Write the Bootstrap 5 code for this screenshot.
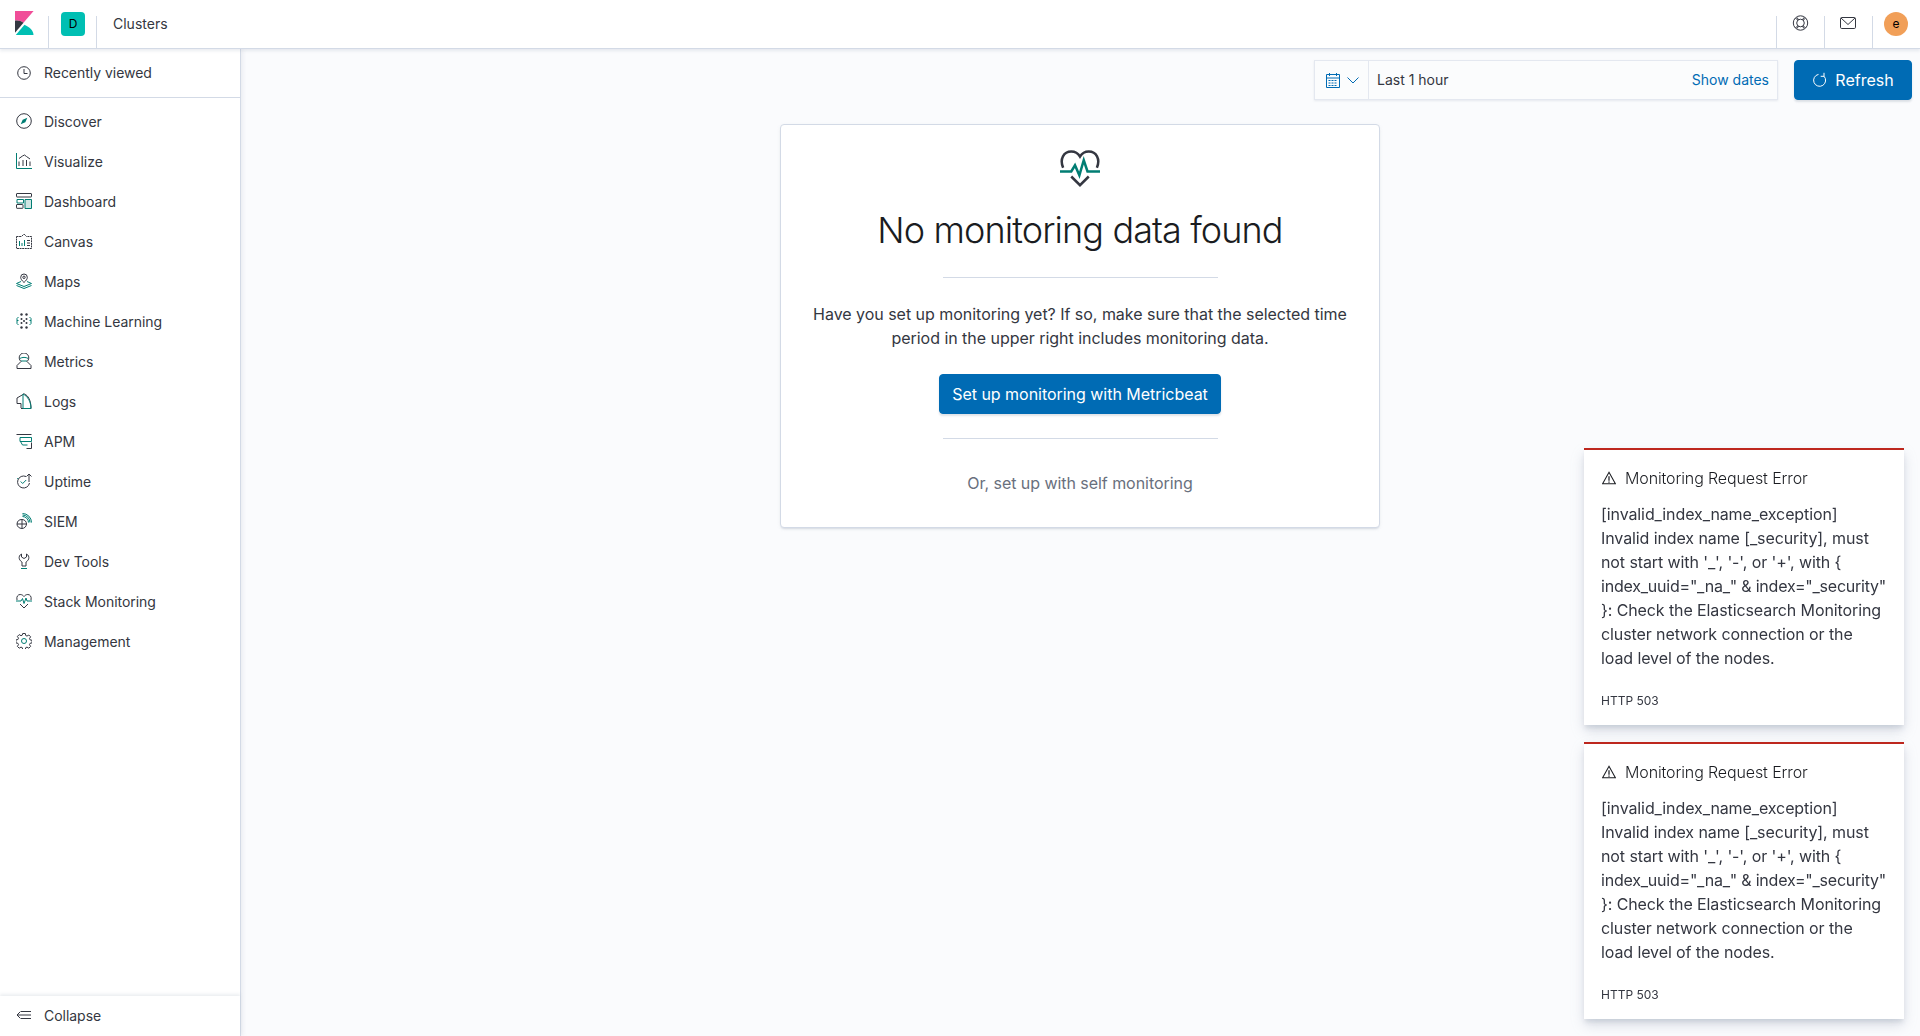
<!DOCTYPE html>
<html lang="en">
<head>
<meta charset="utf-8">
<title>Clusters</title>
<link href="https://cdn.jsdelivr.net/npm/bootstrap@5.3.0/dist/css/bootstrap.min.css" rel="stylesheet">
<style>
html,body{height:100%}
body{font-family:Inter,"Noto Sans",sans-serif;background:#fafbfd;color:#343741;font-size:14px;overflow:hidden}
svg{display:block;flex:none}
.ico-d{fill:none;stroke:#343741;stroke-width:1}
.ico-t{fill:none;stroke:#017d73;stroke-width:1}
.topbar{height:49px;background:#fff;border-bottom:1px solid #d3dae6;box-shadow:0 2px 3px rgba(152,162,179,.2);position:relative;z-index:3}
.top-sec{width:48px;height:32px;margin-top:16px;border-left:1px solid #d3dae6}
.logo-sec{width:48px;padding:11px 0 0 15px}
.tile{width:24px;height:24px;border-radius:4px;background:#00bfb3;color:#000;font-size:12px;margin:-4px 0 0 12px}
.bread-wrap{border-left:1px solid #d3dae6;height:32px;margin-top:16px}
.crumb-txt{margin-top:-16px;padding-left:16px;line-height:48px;color:#343741}
.avatar{width:24px;height:24px;border-radius:50%;background:#f19f58;color:#000;font-size:12px;margin:-4px 0 0 11px}
.help-ico{margin:-1px 0 0 15px}
.app{height:987px}
.side{width:241px;background:#fff;border-right:1px solid #d3dae6;box-shadow:2px 0 4px rgba(152,162,179,.15)}
.side-row{height:40px;padding-left:16px;gap:12px;color:#343741;text-decoration:none;letter-spacing:-.03px}
.side-recent{height:49px;border-bottom:1px solid #d3dae6;margin-bottom:3px;padding-bottom:1px}
.side-foot{height:40px;box-shadow:0 -2px 3px rgba(152,162,179,.18);margin-top:auto;padding-bottom:2px}
.content{min-width:0}
.picker-row{padding:11px 8px 0 0;gap:16px;height:75px}
.picker{width:464px;height:40px;border:1px solid #e4e8f0;background:#fbfcfd;box-shadow:0 1px 2px rgba(152,162,179,.2)}
.quick{width:54px;border-right:1px solid #e4e8f0;padding-left:10px;gap:6px}
.range{padding:0 8px 2px 8px}
.range a{color:#006bb4;text-decoration:none}
.btn-kb{--bs-btn-bg:#006bb4;--bs-btn-border-color:#006bb4;--bs-btn-hover-bg:#005c9e;--bs-btn-hover-border-color:#005c9e;--bs-btn-font-size:16px;--bs-btn-border-radius:4px;height:40px;box-shadow:0 2px 2px rgba(152,162,179,.3)}
.btn-refresh{width:118px;gap:8px;padding:0 0 0 1px}
.panel{width:600px;margin:0 0 0 539px;height:404px;border:1px solid #d3dae6;border-radius:4px;box-shadow:0 2px 2px -1px rgba(152,162,179,.3),0 1px 5px -2px rgba(152,162,179,.3);padding:24px 24px 0;text-align:center}
.panel-ico{height:40px;display:flex;justify-content:center;margin-bottom:17px}
.panel-h{font-size:36px;font-weight:300;line-height:48px;color:#1a1c21;margin:0;letter-spacing:-.9px}
.half{width:275px;height:1px;background:#d3dae6;margin:23px auto 24px}
.panel-p{font-size:16px;line-height:24px;margin:0 0 24px;color:#343741;letter-spacing:-.03px}
.btn-setup{width:282px;padding:0;letter-spacing:-.03px}
.half2{margin:24px auto 32px}
.self{font-size:16px;line-height:24px;color:#69707d;text-decoration:none;letter-spacing:-.05px}
.toasts{position:fixed;right:16px;bottom:17px;width:320px;gap:17px}
.err{background:#fff;border-top:2px solid #bd271e;box-shadow:0 6px 12px -1px rgba(152,162,179,.4),0 4px 4px -1px rgba(152,162,179,.25);padding:16px 15px 16px 17px;height:277px}
.err-h{font-size:16px;font-weight:300;line-height:24px;color:#1a1c21;gap:9px;margin:0 0 12px 1px;letter-spacing:-.12px}
.err-p{font-size:16px;line-height:24px;margin:0 0 22px;color:#343741;letter-spacing:-.1px;white-space:nowrap}
.err-tight{letter-spacing:-.22px}
.err-c{font-size:12px;line-height:18px;color:#343741}
</style>
</head>
<body class="d-flex flex-column">
<header class="topbar d-flex">
  <div class="logo-sec">
    <svg width="19" height="24" viewBox="0 0 19 24"><path fill="#f04e98" d="M0 0h18.600L8.500 11.800C6 9.800 3 9.300 0 9.700z"/><path fill="#343741" d="M0 9.700c3-.4 6 .1 8.500 2.100L0 21.800z"/><path fill="#00bfb3" d="M.8 24 9.500 13.800c5 2.200 8.800 5.700 9 10.200z"/></svg>
  </div>
  <div class="top-sec d-flex">
    <div class="tile d-flex align-items-center justify-content-center">D</div>
  </div>
  <div class="bread-wrap"><div class="crumb-txt">Clusters</div></div>
  <div class="ms-auto d-flex">
    <div class="top-sec">
      <svg class="help-ico" width="17" height="16" viewBox="0 0 16 16"><g class="ico-d"><circle cx="8" cy="8" r="7.200"/><circle cx="8" cy="8" r="3.800"/><path d="m3 3 2.300 2.300M13 3l-2.300 2.300M3 13l2.300-2.300M13 13l-2.300-2.300M4.600 2.400 6 5M11.400 2.400 10 5M4.600 13.600 6 11M11.400 13.600 10 11"/></g></svg>
    </div>
    <div class="top-sec">
      <svg class="help-ico" width="16" height="16" viewBox="0 0 16 16"><g class="ico-d"><rect x=".5" y="2.500" width="15" height="11" rx="1.200"/><path d="m1 3 7 6.500L15 3"/></g></svg>
    </div>
    <div class="top-sec">
      <div class="avatar d-flex align-items-center justify-content-center">e</div>
    </div>
  </div>
</header>
<div class="app d-flex">
  <nav class="side d-flex flex-column flex-shrink-0">
    <a class="side-row side-recent d-flex align-items-center" href="#"><svg width="16" height="16" viewBox="0 0 16 16"><g class="ico-d"><circle cx="8" cy="8" r="6.300"/><path d="M8 4v4.500h3.500"/></g></svg>Recently viewed</a>
    <a class="side-row d-flex align-items-center" href="#"><svg width="16" height="16" viewBox="0 0 16 16"><circle class="ico-d" cx="8" cy="8" r="7.300"/><path fill="#017d73" d="M11.300 4.700 9.300 9.300 4.700 11.300l2-4.600z"/></svg>Discover</a>
    <a class="side-row d-flex align-items-center" href="#"><svg width="16" height="16" viewBox="0 0 16 16"><path class="ico-t" d="M.5 0v15.500H16"/><path class="ico-d" d="M3 13V8.500M7 13V7M10.500 13V7M14 13V8.500M3 5.500 6.500 3 8.500 2l2 1.500 3.500 2.500"/></svg>Visualize</a>
    <a class="side-row d-flex align-items-center" href="#"><svg width="16" height="16" viewBox="0 0 16 16"><rect class="ico-d" x=".5" y=".5" width="15" height="3.500" rx=".5"/><path fill="#cfe5e3" stroke="#017d73" d="M9 6.500h6.500v9H9z"/><path class="ico-t" d="M1 6.500h6.500V10H1z"/><rect class="ico-d" x=".5" y="11.500" width="6.500" height="3.800" rx=".5"/></svg>Dashboard</a>
    <a class="side-row d-flex align-items-center" href="#"><svg width="16" height="16" viewBox="0 0 16 16"><path class="ico-d" d="M.5 3.500h5L8 1l2.500 2.500h5v12H.500z" stroke-dasharray="2 .6"/><path class="ico-t" d="M3.500 8v5M6 10v3M8.500 7v6"/><path class="ico-d" d="M11 7.500h3M11 10h3M11 12.500h3"/></svg>Canvas</a>
    <a class="side-row d-flex align-items-center" href="#"><svg width="16" height="16" viewBox="0 0 16 16"><path class="ico-d" d="M8 9.500C5.800 7.500 4.700 6 4.700 4.300a3.300 3.300 0 0 1 6.600 0C11.300 6 10.200 7.500 8 9.500z"/><circle class="ico-d" cx="8" cy="4.300" r="1.200"/><path class="ico-t" d="m5 8.500-4.500 2L8 13.500l7.500-3L11 8.500M.5 12.500 8 15.500l7.500-3"/></svg>Maps</a>
    <a class="side-row d-flex align-items-center" href="#"><svg width="16" height="16" viewBox="0 0 16 16"><g fill="#343741"><circle cx="5.500" cy="1.500" r="1.200"/><circle cx="10.500" cy="1.500" r="1.200"/><circle cx="5.500" cy="14.500" r="1.200"/><circle cx="10.500" cy="14.500" r="1.200"/><circle cx="5.500" cy="6" r="1"/><circle cx="10.500" cy="6" r="1"/><circle cx="5.500" cy="10" r="1"/><circle cx="10.500" cy="10" r="1"/><circle cx="8" cy="8" r="1"/></g><path class="ico-t" d="M2.500 4 1 5.500v5l1.500 1.500M13.500 4 15 5.500v5L13.500 12M1 7.500h1.500M15 7.500h-1.500"/></svg>Machine Learning</a>
    <a class="side-row d-flex align-items-center" href="#"><svg width="16" height="16" viewBox="0 0 16 16"><path class="ico-d" d="M5 8.500A4.800 4.800 0 1 1 11 8.500"/><path class="ico-t" d="M3.800 5.500c2.500-1.500 6-1.500 8.400 0M5 8h6"/><path class="ico-d" d="M5 8.500 1 12.500v3h14v-3l-4-4"/></svg>Metrics</a>
    <a class="side-row d-flex align-items-center" href="#"><svg width="16" height="16" viewBox="0 0 16 16"><path class="ico-d" d="M7 1.500 1 5v5.500h4V15"/><path class="ico-d" d="M7 1h1.500c3.500 1.500 6.500 6 6.500 14.500H5"/><path class="ico-t" d="M7 1v14.500h8C15 9 12 3.500 7 1z"/></svg>Logs</a>
    <a class="side-row d-flex align-items-center" href="#"><svg width="16" height="16" viewBox="0 0 16 16"><path class="ico-d" d="M.500 1.500h15M15.500 9.500v6h-5"/><path class="ico-t" d="M4 4.500h11.500v4H4zM4.500 8.500l2 3.500h5"/></svg>APM</a>
    <a class="side-row d-flex align-items-center" href="#"><svg width="16" height="16" viewBox="0 0 16 16"><path class="ico-d" d="M10 3.500a6 6 0 1 0 3.500 6.500M13 9V1M10.500 3.500 13 1l2.500 2.500"/><path class="ico-t" d="m4.700 8.500 2 2 3.500-3.500M1.500 6l.5-1"/></svg>Uptime</a>
    <a class="side-row d-flex align-items-center" href="#"><svg width="16" height="16" viewBox="0 0 16 16"><path class="ico-d" d="M6 15.500V11H1A5 5 0 0 1 6 6.500c2.800 0 4.500 2.200 4.500 4.500S8.500 15.500 6 15.500zM1 11c0 2.500 2.200 4.500 5 4.500M6 6.500V11h4.500"/><path class="ico-t" d="M6.500 3.500a6 6 0 0 1 6 6M6.500.5a9 9 0 0 1 9 9M6.500 2a7.500 7.500 0 0 1 7.500 7.500"/></svg>SIEM</a>
    <a class="side-row d-flex align-items-center" href="#"><svg width="16" height="16" viewBox="0 0 16 16"><path class="ico-d" d="M5.500 1C3.500 2 2.800 4 3.300 5.800 3.800 7.500 5 8.300 6 9v4h4V9c1-.7 2.200-1.500 2.700-3.200C13.200 4 12.500 2 10.500 1v3L8 5.500 5.500 4z"/><path class="ico-t" d="M5 15.500h6"/></svg>Dev Tools</a>
    <a class="side-row d-flex align-items-center" href="#"><svg width="16" height="16" viewBox="0 0 16 16"><path class="ico-d" d="M1 7C.200 3.500 2 1.500 4.200 1.500 6 1.500 7.200 2.500 8 3.500c.8-1 2-2 3.800-2C14 1.500 15.800 3.500 15 7M4 11l4 4 4-4"/><path class="ico-t" d="M0 8h5l1.500-2.500L8 10.500 10 5l1 3h5"/></svg>Stack Monitoring</a>
    <a class="side-row d-flex align-items-center" href="#"><svg width="16" height="16" viewBox="0 0 16 16"><path class="ico-d" d="M6.700.5h2.600l.4 2 1.300.6 1.800-1.100 1.800 1.800-1.100 1.800.6 1.300 2 .4v2.600l-2 .4-.6 1.300 1.100 1.800-1.800 1.800-1.800-1.100-1.300.6-.4 2H6.700l-.4-2-1.300-.6-1.800 1.100-1.800-1.800 1.100-1.800-.6-1.300-2-.4V6.900l2-.4.6-1.300L1.400 3.400l1.800-1.800L5 2.700l1.300-.6z"/><circle class="ico-t" cx="8" cy="8" r="2.500"/></svg>Management</a>
    <a class="side-row side-foot d-flex align-items-center" href="#"><svg width="16" height="16" viewBox="0 0 16 16"><path class="ico-d" d="M4.500 4.500H15M1 8h14M4.500 11.500H15M4 5 1 8l3 3"/></svg>Collapse</a>
  </nav>
  <main class="content flex-grow-1">
    <div class="picker-row d-flex justify-content-end">
      <div class="picker d-flex">
        <div class="quick d-flex align-items-center">
          <svg width="16" height="16" viewBox="0 0 16 16"><path fill="none" stroke="#006bb4" d="M1.500 2.500h13v13h-13zM1.500 6h13M4.500 1v3M11.500 1v3"/><path stroke="#006bb4" stroke-dasharray="2 1" d="M3.500 8.500h9M3.500 11h9M3.500 13.500h9"/></svg>
          <svg width="12" height="12" viewBox="0 0 12 12"><path fill="none" stroke="#006bb4" d="m.5 3.500 5.500 5.500 5.500-5.500"/></svg>
        </div>
        <div class="range flex-grow-1 d-flex align-items-center justify-content-between"><span>Last 1 hour</span><a href="#">Show dates</a></div>
      </div>
      <button class="btn btn-primary btn-kb btn-refresh d-flex align-items-center justify-content-center" type="button"><svg width="14" height="16" viewBox="0 0 14 16"><path fill="none" stroke="#fff" d="M11 4.200A6 6 0 1 1 5.500 2.400M11 .8v3.500H7.700"/></svg>Refresh</button>
    </div>
    <section class="panel card">
      <div class="panel-ico"><svg width="40" height="40" viewBox="0 0 32 32"><g fill="none" stroke-width="2"><path stroke="#343741" d="M2.500 15C-.5 8 3 2 9 2c3 0 5.500 1.500 7 4 1.500-2.500 4-4 7-4 6 0 9.500 6 6.500 13M9 22l7 7 7-7"/><path stroke="#017d73" d="M0 18h9l3-5 3.500 8L19 9l3 9h10"/></g></svg></div>
      <h1 class="panel-h">No monitoring data found</h1>
      <div class="half"></div>
      <p class="panel-p">Have you set up monitoring yet? If so, make sure that the selected time period in the upper right includes monitoring data.</p>
      <div><button class="btn btn-primary btn-kb btn-setup" type="button">Set up monitoring with Metricbeat</button></div>
      <div class="half half2"></div>
      <div><a class="self" href="#">Or, set up with self monitoring</a></div>
    </section>
  </main>
</div>
<div class="toasts d-flex flex-column">
  <div class="err">
    <div class="err-h d-flex align-items-center"><svg width="14" height="14" viewBox="0 0 16 16"><path fill="none" stroke="#1a1c21" stroke-width="1.200" d="M8 1.500 15.300 14.500H.700z"/><path stroke="#1a1c21" stroke-width="1.400" d="M8 6v5M8 12v1.300"/></svg>Monitoring Request Error</div>
    <p class="err-p">[invalid_index_name_exception]<br>Invalid index name [_security], must<br>not start with '_', '-', or '+', with {<br><span class="err-tight">index_uuid="_na_" &amp; index="_security"</span><br>}: Check the Elasticsearch Monitoring<br>cluster network connection or the<br>load level of the nodes.</p>
    <div class="err-c">HTTP 503</div>
  </div>
  <div class="err">
    <div class="err-h d-flex align-items-center"><svg width="14" height="14" viewBox="0 0 16 16"><path fill="none" stroke="#1a1c21" stroke-width="1.200" d="M8 1.500 15.300 14.500H.700z"/><path stroke="#1a1c21" stroke-width="1.400" d="M8 6v5M8 12v1.300"/></svg>Monitoring Request Error</div>
    <p class="err-p">[invalid_index_name_exception]<br>Invalid index name [_security], must<br>not start with '_', '-', or '+', with {<br><span class="err-tight">index_uuid="_na_" &amp; index="_security"</span><br>}: Check the Elasticsearch Monitoring<br>cluster network connection or the<br>load level of the nodes.</p>
    <div class="err-c">HTTP 503</div>
  </div>
</div>
<script src="https://cdn.jsdelivr.net/npm/bootstrap@5.3.0/dist/js/bootstrap.bundle.min.js"></script>
</body>
</html>
